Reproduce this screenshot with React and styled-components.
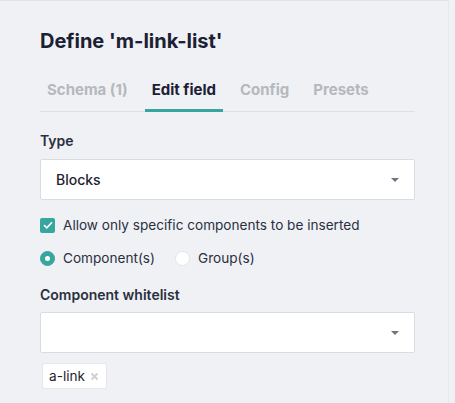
import React from 'react';
import styled, { createGlobalStyle } from 'styled-components';

const teal = '#37a69e';

const GlobalStyle = createGlobalStyle`
  html, body {
    margin: 0;
    padding: 0;
    background: #eff1f5;
  }
  body {
    font-family: Inter, "Noto Sans", sans-serif;
    color: #252a3a;
  }
`;

const Panel = styled.div`
  width: 375px;
  height: 402px;
  border-top: 1px solid #e2e4e8;
  border-right: 1px solid #e6e8ec;
  padding: 0 33px 0 40px;
  background: #eff1f5;
`;

const Title = styled.h1`
  margin: 0;
  padding-top: 28px;
  font-size: 20px;
  line-height: 24px;
  font-weight: 700;
  color: #1b2032;
`;

const Tabs = styled.div`
  display: flex;
  gap: 10px;
  margin-top: 27px;
  border-bottom: 1px solid #dcdfe4;
`;

const Tab = styled.div`
  padding: 0 7px 9px;
  margin-bottom: -1px;
  font-size: 15px;
  line-height: 20px;
  font-weight: 700;
  color: ${p => (p.active ? '#1b2032' : '#b6b8bd')};
  border-bottom: 3px solid ${p => (p.active ? teal : 'transparent')};
`;

const Label = styled.div`
  margin-top: ${p => p.top}px;
  font-size: 14px;
  line-height: 20px;
  font-weight: 600;
  color: #2a2f3e;
`;

const Select = styled.div`
  display: flex;
  align-items: center;
  justify-content: space-between;
  height: 41px;
  margin-top: ${p => p.top}px;
  box-sizing: border-box;
  padding: 0 15px;
  background: #fff;
  border: 1px solid #d9dce1;
  border-radius: 2px;
  font-size: 14px;
  font-weight: 500;
  color: #1f2330;
`;

const Caret = styled.span`
  width: 0;
  height: 0;
  border-left: 4px solid transparent;
  border-right: 4px solid transparent;
  border-top: 4px solid #707480;
`;

const CheckRow = styled.label`
  display: flex;
  align-items: center;
  gap: 8px;
  margin-top: 16px;
  font-size: 13.6px;
  line-height: 18px;
  color: #2a2f3e;
`;

const Box = styled.span`
  display: inline-flex;
  align-items: center;
  justify-content: center;
  width: 15px;
  height: 15px;
  border-radius: 2px;
  background: ${teal};
`;

const RadioRow = styled.div`
  display: flex;
  align-items: center;
  gap: 20px;
  margin-top: 15px;
`;

const RadioItem = styled.label`
  display: flex;
  align-items: center;
  gap: 8px;
  font-size: 13.6px;
  line-height: 18px;
  color: #2a2f3e;
`;

const Dot = styled.span`
  width: 15px;
  height: 15px;
  border-radius: 50%;
  box-sizing: border-box;
  display: inline-flex;
  align-items: center;
  justify-content: center;
  background: ${p => (p.checked ? teal : '#fff')};
  border: 1px solid ${p => (p.checked ? teal : '#e3e5e9')};
  &::after {
    content: '';
    width: 5px;
    height: 5px;
    border-radius: 50%;
    background: ${p => (p.checked ? '#fff' : 'transparent')};
  }
`;

const Tag = styled.div`
  display: flex;
  align-items: center;
  gap: 5px;
  width: fit-content;
  margin: 10px 0 0 2px;
  height: 26px;
  box-sizing: border-box;
  padding: 0 7px 0 6px;
  background: #fff;
  border: 1px solid #e4e6ea;
  border-radius: 2px;
  font-size: 13.6px;
  color: #1f2330;
`;

export default function App() {
  return (
    <>
      <GlobalStyle />
      <Panel>
        <Title>Define 'm-link-list'</Title>
        <Tabs>
          <Tab>Schema (1)</Tab>
          <Tab active>Edit field</Tab>
          <Tab>Config</Tab>
          <Tab>Presets</Tab>
        </Tabs>
        <Label top={19}>Type</Label>
        <Select top={8}>
          <span>Blocks</span>
          <Caret />
        </Select>
        <CheckRow>
          <Box>
            <svg width="10" height="8" viewBox="0 0 10 8" fill="none">
              <path d="M1 4.2 L3.8 6.8 L9 1.2" stroke="#fff" strokeWidth="1.6" />
            </svg>
          </Box>
          Allow only specific components to be inserted
        </CheckRow>
        <RadioRow>
          <RadioItem>
            <Dot checked />
            Component(s)
          </RadioItem>
          <RadioItem>
            <Dot />
            Group(s)
          </RadioItem>
        </RadioRow>
        <Label top={18}>Component whitelist</Label>
        <Select top={7}>
          <span />
          <Caret />
        </Select>
        <Tag>
          a-link
          <svg width="9" height="9" viewBox="0 0 9 9">
            <path d="M1.5 1.5 L7.5 7.5 M7.5 1.5 L1.5 7.5" stroke="#cfd1d5" strokeWidth="2" />
          </svg>
        </Tag>
      </Panel>
    </>
  );
}
